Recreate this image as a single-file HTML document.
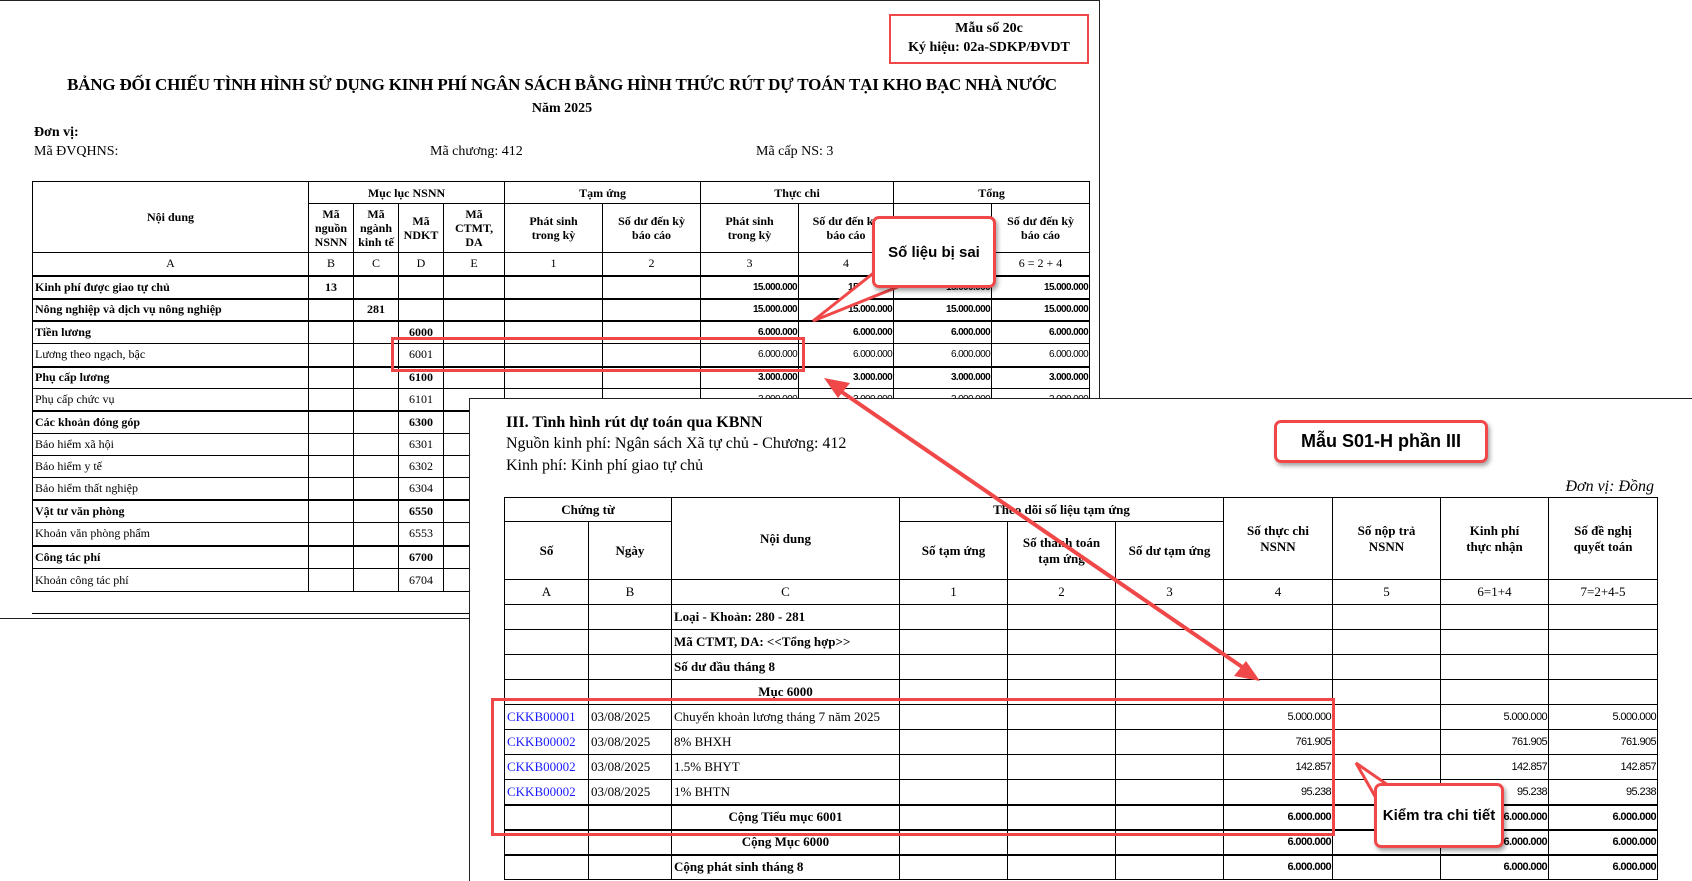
<!DOCTYPE html>
<html style="width:1692px;height:881px;overflow:hidden"><head><meta charset="utf-8">
<style>
*{margin:0;padding:0;box-sizing:border-box}
body{width:1692px;height:881px;background:#fff;position:relative;overflow:hidden;font-family:"Liberation Serif",serif;color:#000}
.abs{position:absolute;white-space:nowrap}
.doc{position:absolute;background:#fff;border:1px solid #222}
table{border-collapse:collapse;table-layout:fixed;position:absolute}
td{border:1px solid #000;overflow:hidden;white-space:nowrap;padding:0 2px;vertical-align:middle}
.t1 td{font-size:12px}
.t1 .h td{font-weight:bold;text-align:center;font-size:12px;line-height:14px}
.n{text-align:right;font-family:"Liberation Sans",sans-serif;font-size:10px!important;letter-spacing:-0.6px;padding-right:1px}
.b td{font-weight:bold;border-top:2px solid #000}
.d td{border-top:1px dotted #777}
.c{text-align:center}
.t2 td{font-size:13px}
.t2 .h td{font-weight:bold;text-align:center;line-height:16px}
.t2 .n{font-size:11px!important}
a{color:#1a1aff;text-decoration:none}
.rb{position:absolute;border:3px solid #f04848}
.call{position:absolute;background:#fff;border:3px solid #f04848;border-radius:7px;box-shadow:2px 3px 4px rgba(0,0,0,.35);font-family:"Liberation Sans",sans-serif;font-weight:bold;display:flex;align-items:center;justify-content:center}
</style></head><body>

<div class="doc" style="left:0;top:0;width:1100px;height:619px;border-left:none">
  <div class="rb" style="left:889px;top:13px;width:200px;height:50px;border-width:2px"></div>
  <div class="abs" style="left:889px;top:18px;width:200px;text-align:center;font-weight:bold;font-size:14px;line-height:19px">Mẫu số 20c<br>Ký hiệu: 02a-SDKP/ĐVDT</div>
  <div class="abs" style="left:0;top:74px;width:1124px;text-align:center;font-weight:bold;font-size:17px;letter-spacing:-0.2px">BẢNG ĐỐI CHIẾU TÌNH HÌNH SỬ DỤNG KINH PHÍ NGÂN SÁCH BẰNG HÌNH THỨC RÚT DỰ TOÁN TẠI KHO BẠC NHÀ NƯỚC</div>
  <div class="abs" style="left:0;top:100px;width:1124px;text-align:center;font-weight:bold;font-size:14px">Năm 2025</div>
  <div class="abs" style="left:34px;top:124px;font-weight:bold;font-size:14px">Đơn vị:</div>
  <div class="abs" style="left:34px;top:143px;font-size:14px">Mã ĐVQHNS:</div>
  <div class="abs" style="left:430px;top:143px;font-size:14px">Mã chương: 412</div>
  <div class="abs" style="left:756px;top:143px;font-size:14px">Mã cấp NS: 3</div>
  <table class="t1" style="left:32px;top:180px;width:1057px">
    <colgroup><col style="width:276px"><col style="width:45px"><col style="width:45px"><col style="width:45px"><col style="width:61px"><col style="width:98px"><col style="width:98px"><col style="width:98px"><col style="width:95px"><col style="width:98px"><col style="width:98px"></colgroup>
    <tr class="h" style="height:22px"><td rowspan="2">Nội dung</td><td colspan="4">Mục lục NSNN</td><td colspan="2">Tạm ứng</td><td colspan="2">Thực chi</td><td colspan="2">Tổng</td></tr>
    <tr class="h" style="height:49px"><td>Mã<br>nguồn<br>NSNN</td><td>Mã<br>ngành<br>kinh tế</td><td>Mã<br>NDKT</td><td>Mã<br>CTMT,<br>DA</td><td>Phát sinh<br>trong kỳ</td><td>Số dư đến kỳ<br>báo cáo</td><td>Phát sinh<br>trong kỳ</td><td>Số dư đến kỳ<br>báo cáo</td><td></td><td>Số dư đến kỳ<br>báo cáo</td></tr>
    <tr class="c" style="height:23px"><td>A</td><td>B</td><td>C</td><td>D</td><td>E</td><td>1</td><td>2</td><td>3</td><td>4</td><td></td><td>6 = 2 + 4</td></tr>
    <tr class="b" style="height:23px"><td>Kinh phí được giao tự chủ</td><td class="c">13</td><td></td><td></td><td></td><td></td><td></td><td class="n">15.000.000</td><td class="n">15.000.000</td><td class="n">15.000.000</td><td class="n">15.000.000</td></tr>
    <tr class="b" style="height:22px"><td>Nông nghiệp và dịch vụ nông nghiệp</td><td></td><td class="c">281</td><td></td><td></td><td></td><td></td><td class="n">15.000.000</td><td class="n">15.000.000</td><td class="n">15.000.000</td><td class="n">15.000.000</td></tr>
    <tr class="b" style="height:23px"><td>Tiền lương</td><td></td><td></td><td class="c">6000</td><td></td><td></td><td></td><td class="n">6.000.000</td><td class="n">6.000.000</td><td class="n">6.000.000</td><td class="n">6.000.000</td></tr>
    <tr class="d" style="height:23px"><td>Lương theo ngạch, bậc</td><td></td><td></td><td class="c">6001</td><td></td><td></td><td></td><td class="n" style="font-weight:normal">6.000.000</td><td class="n">6.000.000</td><td class="n">6.000.000</td><td class="n">6.000.000</td></tr>
    <tr class="b" style="height:22px"><td>Phụ cấp lương</td><td></td><td></td><td class="c">6100</td><td></td><td></td><td></td><td class="n">3.000.000</td><td class="n">3.000.000</td><td class="n">3.000.000</td><td class="n">3.000.000</td></tr>
    <tr class="d" style="height:22px"><td>Phụ cấp chức vụ</td><td></td><td></td><td class="c">6101</td><td></td><td></td><td></td><td class="n">3.000.000</td><td class="n">3.000.000</td><td class="n">3.000.000</td><td class="n">3.000.000</td></tr>
    <tr class="b" style="height:23px"><td>Các khoản đóng góp</td><td></td><td></td><td class="c">6300</td><td></td><td></td><td></td><td></td><td></td><td></td><td></td></tr>
    <tr class="d" style="height:22px"><td>Bảo hiểm xã hội</td><td></td><td></td><td class="c">6301</td><td></td><td></td><td></td><td></td><td></td><td></td><td></td></tr>
    <tr class="d" style="height:22px"><td>Bảo hiểm y tế</td><td></td><td></td><td class="c">6302</td><td></td><td></td><td></td><td></td><td></td><td></td><td></td></tr>
    <tr class="d" style="height:22px"><td>Bảo hiểm thất nghiệp</td><td></td><td></td><td class="c">6304</td><td></td><td></td><td></td><td></td><td></td><td></td><td></td></tr>
    <tr class="b" style="height:23px"><td>Vật tư văn phòng</td><td></td><td></td><td class="c">6550</td><td></td><td></td><td></td><td></td><td></td><td></td><td></td></tr>
    <tr class="d" style="height:23px"><td>Khoản văn phòng phẩm</td><td></td><td></td><td class="c">6553</td><td></td><td></td><td></td><td></td><td></td><td></td><td></td></tr>
    <tr class="b" style="height:23px"><td>Công tác phí</td><td></td><td></td><td class="c">6700</td><td></td><td></td><td></td><td></td><td></td><td></td><td></td></tr>
    <tr class="d" style="height:23px"><td>Khoản công tác phí</td><td></td><td></td><td class="c">6704</td><td></td><td></td><td></td><td></td><td></td><td></td><td></td></tr>
  </table>
  <div class="abs" style="left:32px;top:612px;width:440px;border-top:1px solid #000"></div>
  <div class="rb" style="left:391px;top:336px;width:414px;height:35px"></div>
</div>

<div class="doc" style="left:469px;top:398px;width:1240px;height:483px;border-bottom:none">
  <div class="abs" style="left:36px;top:15px;font-weight:bold;font-size:16px">III. Tình hình rút dự toán qua KBNN</div>
  <div class="abs" style="left:36px;top:36px;font-size:16px">Nguồn kinh phí: Ngân sách Xã tự chủ - Chương: 412</div>
  <div class="abs" style="left:36px;top:58px;font-size:16px">Kinh phí: Kinh phí giao tự chủ</div>
  <div class="abs" style="left:1084px;top:79px;font-size:16px;font-style:italic;width:100px;text-align:right">Đơn vị: Đồng</div>
  <table class="t2" style="left:34px;top:98px;width:1153px">
    <colgroup><col style="width:84px"><col style="width:83px"><col style="width:228px"><col style="width:108px"><col style="width:108px"><col style="width:108px"><col style="width:109px"><col style="width:108px"><col style="width:108px"><col style="width:109px"></colgroup>
    <tr class="h" style="height:24px"><td colspan="2">Chứng từ</td><td rowspan="2">Nội dung</td><td colspan="3">Theo dõi số liệu tạm ứng</td><td rowspan="2">Số thực chi<br>NSNN</td><td rowspan="2">Số nộp trả<br>NSNN</td><td rowspan="2">Kinh phí<br>thực nhận</td><td rowspan="2">Số đề nghị<br>quyết toán</td></tr>
    <tr class="h" style="height:58px"><td>Số</td><td>Ngày</td><td>Số tạm ứng</td><td>Số thanh toán<br>tạm ứng</td><td>Số dư tạm ứng</td></tr>
    <tr class="c" style="height:25px"><td>A</td><td>B</td><td>C</td><td>1</td><td>2</td><td>3</td><td>4</td><td>5</td><td>6=1+4</td><td>7=2+4-5</td></tr>
    <tr style="height:25px;font-weight:bold"><td></td><td></td><td><b>Loại - Khoản: 280 - 281</b></td><td></td><td></td><td></td><td></td><td></td><td></td><td></td></tr>
    <tr style="height:25px"><td></td><td></td><td><b>Mã CTMT, DA: &lt;&lt;Tổng hợp&gt;&gt;</b></td><td></td><td></td><td></td><td></td><td></td><td></td><td></td></tr>
    <tr style="height:25px"><td></td><td></td><td><b>Số dư đầu tháng 8</b></td><td></td><td></td><td></td><td></td><td></td><td></td><td></td></tr>
    <tr style="height:25px"><td></td><td></td><td class="c"><b>Mục 6000</b></td><td></td><td></td><td></td><td></td><td></td><td></td><td></td></tr>
    <tr style="height:25px"><td><a>CKKB00001</a></td><td>03/08/2025</td><td>Chuyển khoản lương tháng 7 năm 2025</td><td></td><td></td><td></td><td class="n">5.000.000</td><td></td><td class="n">5.000.000</td><td class="n">5.000.000</td></tr>
    <tr class="d" style="height:25px"><td><a>CKKB00002</a></td><td>03/08/2025</td><td>8% BHXH</td><td></td><td></td><td></td><td class="n">761.905</td><td></td><td class="n">761.905</td><td class="n">761.905</td></tr>
    <tr class="d" style="height:25px"><td><a>CKKB00002</a></td><td>03/08/2025</td><td>1.5% BHYT</td><td></td><td></td><td></td><td class="n">142.857</td><td></td><td class="n">142.857</td><td class="n">142.857</td></tr>
    <tr class="d" style="height:25px"><td><a>CKKB00002</a></td><td>03/08/2025</td><td>1% BHTN</td><td></td><td></td><td></td><td class="n">95.238</td><td></td><td class="n">95.238</td><td class="n">95.238</td></tr>
    <tr class="b" style="height:25px"><td></td><td></td><td class="c">Cộng Tiểu mục 6001</td><td></td><td></td><td></td><td class="n">6.000.000</td><td></td><td class="n">6.000.000</td><td class="n">6.000.000</td></tr>
    <tr class="b" style="height:25px"><td></td><td></td><td class="c">Cộng Mục 6000</td><td></td><td></td><td></td><td class="n">6.000.000</td><td></td><td class="n">6.000.000</td><td class="n">6.000.000</td></tr>
    <tr class="b" style="height:25px"><td></td><td></td><td>Cộng phát sinh tháng 8</td><td></td><td></td><td></td><td class="n">6.000.000</td><td></td><td class="n">6.000.000</td><td class="n">6.000.000</td></tr>
  </table>
</div>

<div class="rb" style="left:491px;top:698px;width:844px;height:138px"></div>

<svg width="1692" height="881" style="position:absolute;left:0;top:0">
  <g stroke="#f04848" stroke-width="4" fill="#f04848">
    <line x1="836" y1="388" x2="1248" y2="671"/>
    <polygon points="824,378 850,383 838,398" stroke="none"/>
    <polygon points="1260,681 1234,676 1246,661" stroke="none"/>
  </g>
  <polygon points="813,321 880,268 900,286" fill="#fff" stroke="#f04848" stroke-width="3"/>
  <polygon points="1356,763 1395,790 1380,805" fill="#fff" stroke="#f04848" stroke-width="3"/>
</svg>

<div class="call" style="left:872px;top:216px;width:124px;height:72px;font-size:15px">Số liệu bị sai</div>
<div class="call" style="left:1374px;top:783px;width:130px;height:65px;font-size:15px">Kiểm tra chi tiết</div>
<div class="call" style="left:1274px;top:420px;width:214px;height:43px;font-size:18px;font-weight:bold">Mẫu S01-H phần III</div>
</body></html>
